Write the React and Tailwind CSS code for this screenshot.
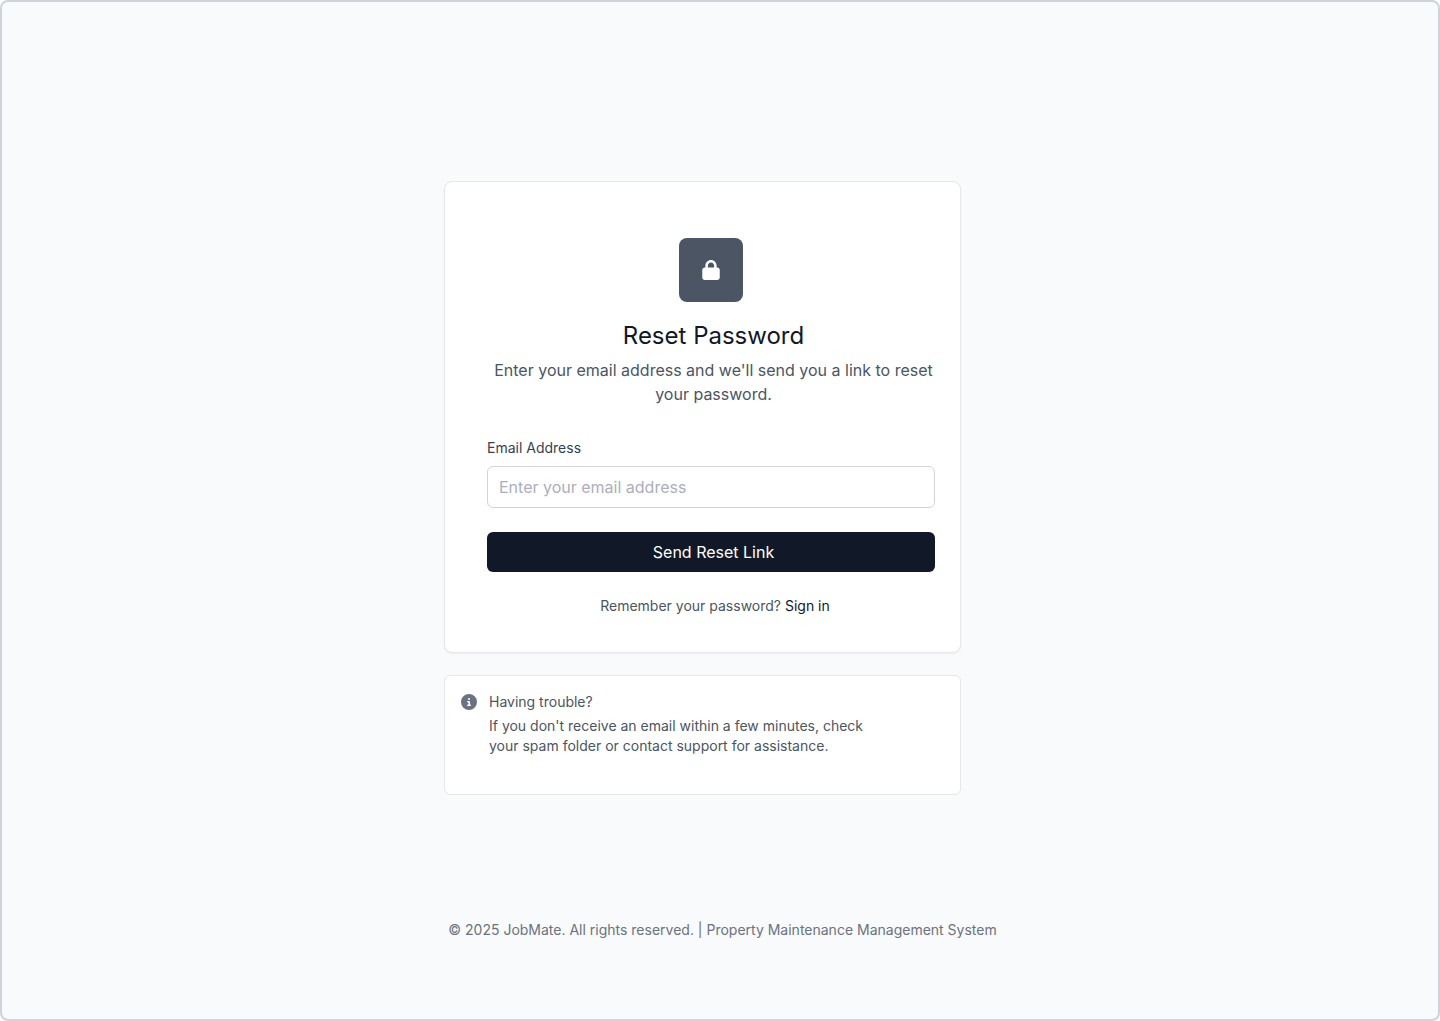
import React from "react";
import { FaLock, FaCircleInfo } from "react-icons/fa6";

export default function App() {
  return (
    <div className="flex min-h-screen flex-col items-center rounded-lg border-2 border-[#ced4da] bg-[#f9fafb] px-4 font-['Inter',sans-serif]">
      <main className="mr-[35px] mt-[179px] w-full max-w-[517px]">
        <section className="rounded-lg border border-[#e5e7eb] bg-white pt-14 pr-[25px] pb-9 pl-[42px] shadow-[0_1px_2px_rgba(0,0,0,0.05)]">
          <div className="mx-auto flex size-16 items-center justify-center rounded-lg bg-[#4b5563] text-white">
            <FaLock size={20} />
          </div>
          <div className="pl-[5px] text-center">
            <h1 className="mt-4 text-2xl/9 text-[#111827]">Reset Password</h1>
            <p className="mt-1 text-base text-[#4b5563]">Enter your email address and we'll send you a link to reset your password.</p>
          </div>
          <form className="mt-8" onSubmit={(e) => e.preventDefault()}>
            <label htmlFor="email" className="block text-sm text-[#374151]">Email Address</label>
            <input id="email" type="email" placeholder="Enter your email address" className="mt-2 block h-[42px] w-full rounded-md border border-[#d1d5db] bg-white px-[11px] text-base placeholder:text-[#adaebc]" />
            <button type="submit" className="mt-6 block h-10 w-full rounded-md bg-[#111827] pb-px pl-[5px] text-base text-white">Send Reset Link</button>
          </form>
          <p className="mt-6 pl-2 text-center text-sm text-[#4b5563]">
            Remember your password? <a href="#signin" className="text-[#111827]">Sign in</a>
          </p>
        </section>
        <aside className="mt-[22px] flex gap-3 rounded-md border border-[#e5e7eb] bg-white px-4 pt-4 pb-[38px]">
          <FaCircleInfo size={16} className="mt-[2px] shrink-0 text-[#6b7280]" />
          <div className="text-sm text-[#4b5563]">
            <h2>Having trouble?</h2>
            <p className="mt-1 max-w-[390px]">If you don't receive an email within a few minutes, check your spam folder or contact support for assistance.</p>
          </div>
        </aside>
      </main>
      <footer className="mt-[125px] pb-16 pl-[5px] text-sm text-[#6b7280]">© 2025 JobMate. All rights reserved. | Property Maintenance Management System</footer>
    </div>
  );
}
